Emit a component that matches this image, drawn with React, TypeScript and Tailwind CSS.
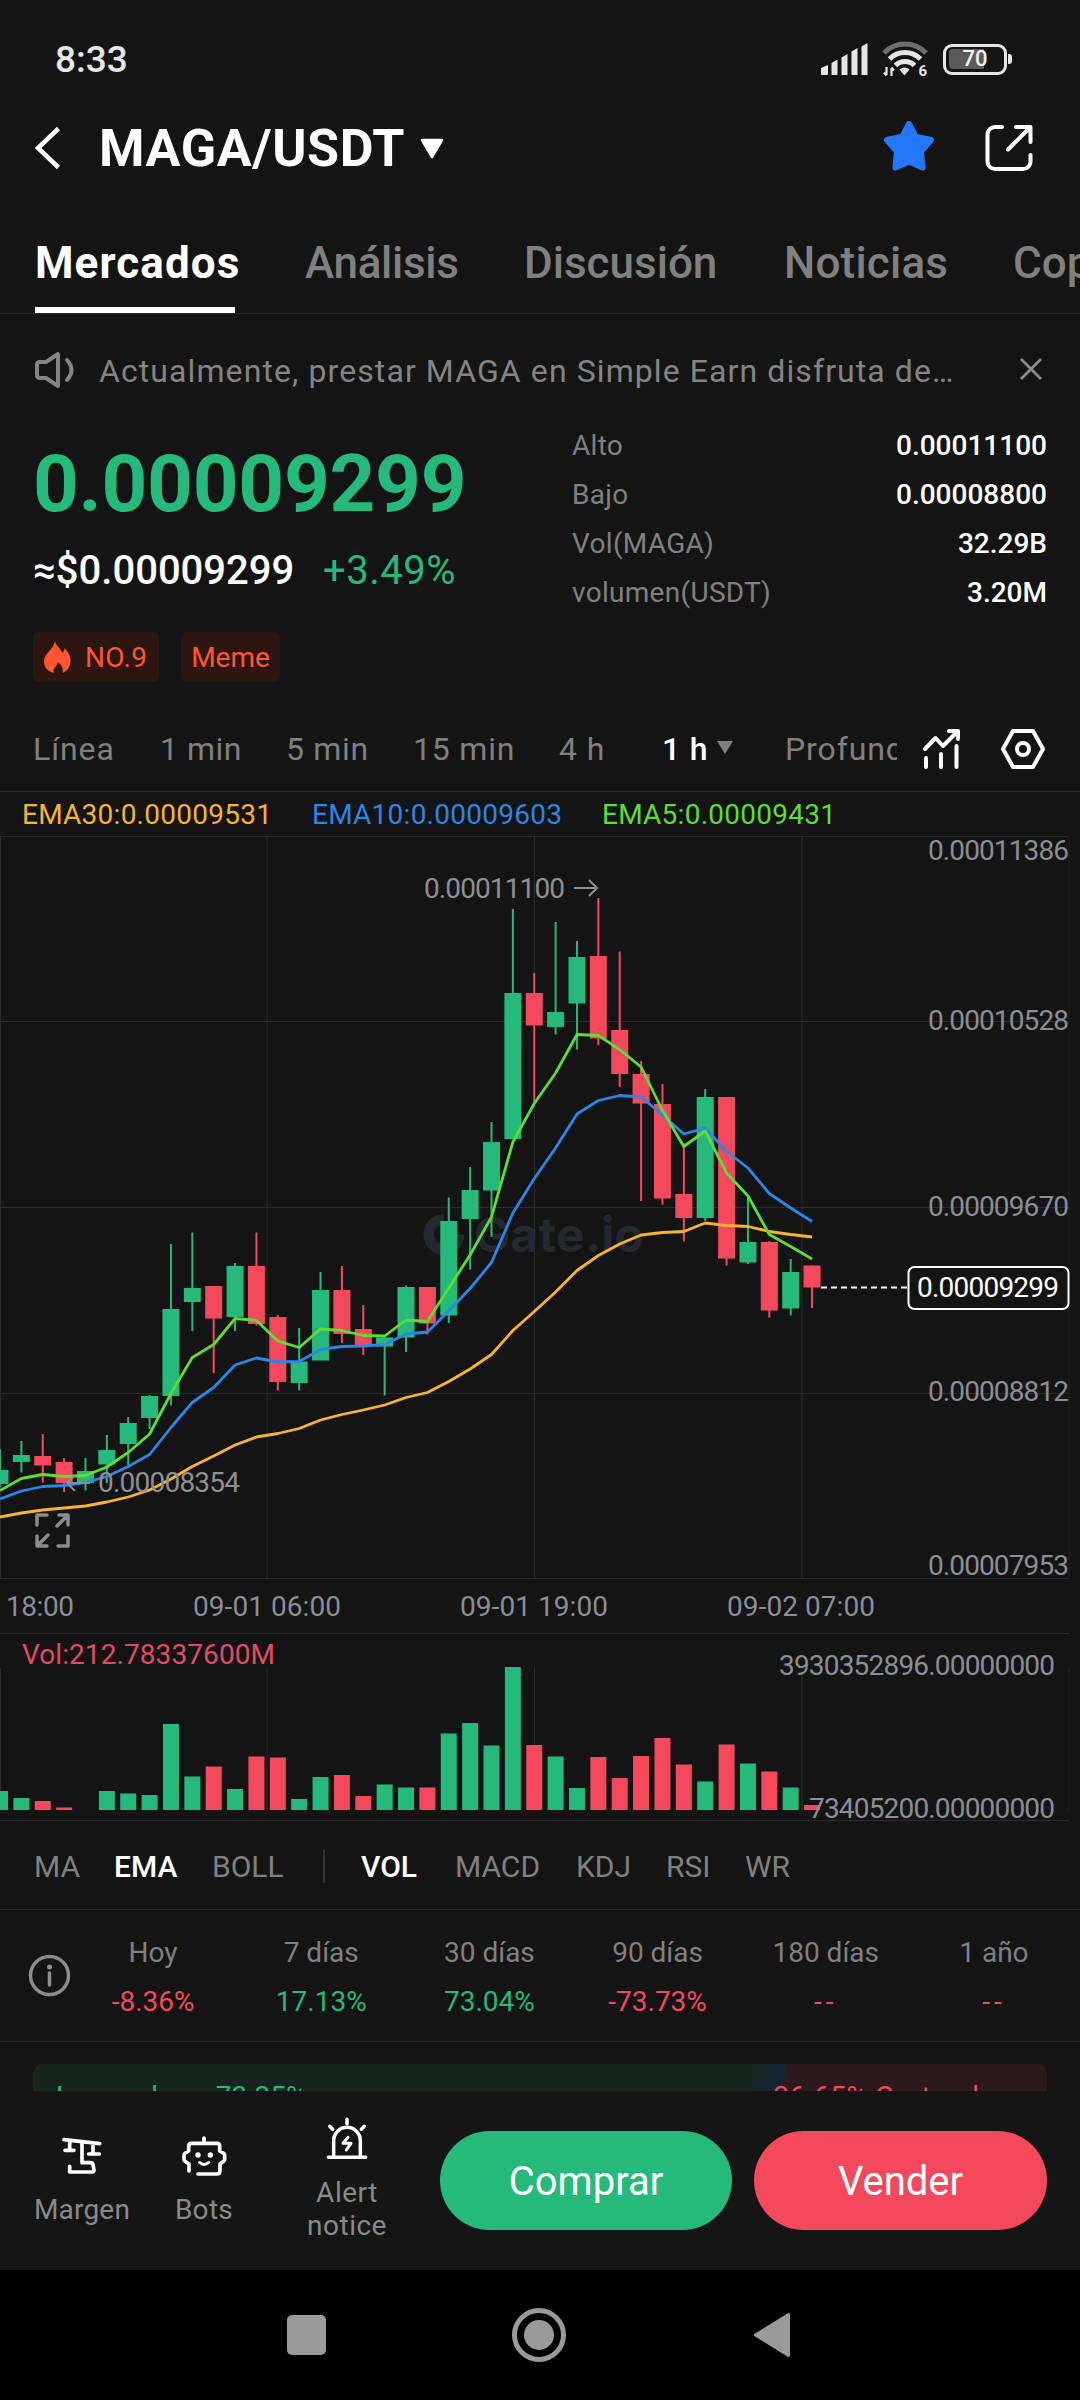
import { clsx } from 'clsx'

type Side = 'up' | 'down'

interface Candle {
  side: Side
  high: number
  low: number
  top: number
  bottom: number
  volume: number
}

const UP = '#25b97b'
const DOWN = '#f4495d'
const STEP = 21.37

// side, high, low, body top, body bottom, volume bar height
const RAW: [Side, number, number, number, number, number][] = [
  ['up', 1449, 1487, 1470, 1484, 19],
  ['up', 1441, 1472.5, 1455, 1462, 12],
  ['down', 1434, 1482.5, 1456, 1465.5, 9],
  ['down', 1458, 1492, 1462, 1483, 2.5],
  ['up', 1458, 1490.5, 1471, 1483, 0],
  ['up', 1435, 1483, 1450, 1464.5, 19],
  ['up', 1417, 1465.5, 1423, 1444, 16.5],
  ['up', 1395, 1429, 1396, 1418, 15],
  ['up', 1244, 1405.5, 1309, 1396, 86],
  ['up', 1232.5, 1331, 1288, 1302, 33.5],
  ['down', 1286, 1373, 1286, 1318.5, 43.5],
  ['up', 1263, 1331, 1266, 1317, 21],
  ['down', 1232.5, 1325.5, 1266, 1324, 53.5],
  ['down', 1315, 1390.5, 1317, 1382, 52.5],
  ['up', 1328, 1390.5, 1361.5, 1383, 11],
  ['up', 1272, 1360, 1290, 1360.5, 33],
  ['down', 1266, 1343, 1290, 1334, 35],
  ['down', 1305, 1355, 1329, 1346, 14],
  ['up', 1337, 1395.5, 1337.5, 1346.5, 25.5],
  ['up', 1285.5, 1352, 1287, 1337.5, 22.5],
  ['down', 1287, 1334.5, 1287, 1323.5, 22.5],
  ['up', 1197.5, 1323, 1221, 1315.5, 76.5],
  ['up', 1167, 1269.5, 1190, 1219, 87],
  ['up', 1122, 1237, 1142, 1190.5, 64.5],
  ['up', 909, 1139, 993, 1139, 143],
  ['down', 973, 1102.5, 993, 1025.5, 65],
  ['up', 922, 1034.5, 1012, 1027, 53.5],
  ['up', 941, 1049.5, 957, 1003.5, 22],
  ['down', 898, 1045, 956, 1038.5, 53],
  ['down', 951.5, 1087, 1030, 1074, 32],
  ['down', 1061, 1201, 1074, 1103.5, 54],
  ['down', 1084, 1204.5, 1104, 1198.5, 72],
  ['down', 1143.5, 1241.5, 1194, 1218, 45.5],
  ['up', 1089, 1221, 1097, 1218, 28.5],
  ['down', 1097, 1265.5, 1097, 1258.5, 65.5],
  ['up', 1197, 1264, 1242, 1262.5, 46.5],
  ['down', 1241, 1317.5, 1242, 1310.5, 38.5],
  ['up', 1259, 1315.5, 1272, 1308.5, 22.5],
  ['down', 1265.5, 1308, 1265.5, 1287.5, 5],
]

const candles: Candle[] = RAW.map(([side, high, low, top, bottom, volume]) => ({ side, high, low, top, bottom, volume }))

const EMA5 = [
  1490.5, 1478.5, 1474.5, 1476.5, 1475.5, 1467, 1452.5, 1434, 1393.5, 1357.5, 1344.5, 1318.5, 1320.5, 1341, 1347.5, 1329,
  1330.5, 1335.5, 1336, 1320, 1321.5, 1288, 1255, 1217, 1142, 1103.5, 1073, 1034.5, 1035.5, 1049.5, 1067, 1110.5, 1146.5,
  1131, 1173, 1196, 1234.5, 1246.5, 1259,
]
const EMA10 = [
  1499, 1491, 1486.5, 1485.5, 1482.5, 1476.5, 1466.5, 1454.5, 1427.5, 1402.5, 1387.5, 1365, 1358, 1362, 1361.5, 1349.5,
  1346.5, 1346, 1344.5, 1334, 1332, 1311, 1288.5, 1262.5, 1213, 1178.5, 1148, 1114, 1100.5, 1095.5, 1097, 1115, 1134, 1128,
  1151.5, 1168, 1193.5, 1208, 1221.5,
]
const EMA30 = [
  1517, 1513, 1510, 1508, 1506, 1502, 1497, 1490, 1479, 1466.5, 1456, 1445, 1437, 1433.5, 1428.5, 1420, 1414.5, 1410, 1405,
  1397.5, 1392.5, 1381.5, 1369, 1354.5, 1330.5, 1311.5, 1292, 1270.5, 1255.5, 1244, 1235, 1232.5, 1231.5, 1223, 1225.5,
  1226.5, 1231.5, 1234.5, 1237,
]

const toPoints = (values: number[]) => values.map((y, i) => `${(i * STEP).toFixed(1)},${y}`).join(' ')

const GRID_X = [0.5, 267, 534.5, 802]
const GRID_Y = [836.5, 1021.5, 1207.5, 1393.5, 1578.5]

const priceLabels = [
  { y: 860, text: '0.00011386' },
  { y: 1029.5, text: '0.00010528' },
  { y: 1216, text: '0.00009670' },
  { y: 1401, text: '0.00008812' },
  { y: 1575, text: '0.00007953' },
]

const timeLabels = [
  { x: 6, w: 68, text: '18:00' },
  { x: 193, w: 148, text: '09-01 06:00' },
  { x: 460, w: 148, text: '09-01 19:00' },
  { x: 727, w: 148, text: '09-02 07:00' },
]

const tabs = [
  { label: 'Mercados', cls: 'w-[270px] font-bold text-white tracking-[1.1px]' },
  { label: 'Análisis', cls: 'w-[219px] font-medium text-[#808080] tracking-[-0.3px]' },
  { label: 'Discusión', cls: 'w-[260px] font-medium text-[#808080]' },
  { label: 'Noticias', cls: 'w-[229px] font-medium text-[#808080] tracking-[0.2px]' },
  { label: 'Copiar', cls: 'font-medium text-[#808080]' },
]

const stats = [
  ['Alto', '0.00011100'],
  ['Bajo', '0.00008800'],
  ['Vol(MAGA)', '32.29B'],
  ['volumen(USDT)', '3.20M'],
]

const intervals = [
  { label: 'Línea', cls: 'w-[127px] tracking-[0.9px]' },
  { label: '1 min', cls: 'w-[126px] tracking-[0.5px]' },
  { label: '5 min', cls: 'w-[127px] tracking-[0.7px]' },
  { label: '15 min', cls: 'w-[146px] tracking-[0.8px]' },
  { label: '4 h', cls: 'w-[103px] tracking-[0.9px]' },
]

const changes = [
  { label: 'Hoy', value: '-8.36%', side: 'down' },
  { label: '7 días', value: '17.13%', side: 'up' },
  { label: '30 días', value: '73.04%', side: 'up' },
  { label: '90 días', value: '-73.73%', side: 'down' },
  { label: '180 días', value: '--', side: 'down' },
  { label: '1 año', value: '--', side: 'down' },
]

function StatusBar() {
  return (
    <div className="flex h-[118px] items-center justify-between pl-[55px] pr-[68px]">
      <span className="pt-[1px] text-[37px] font-medium text-[#e6e6e6]">8:33</span>
      <div className="flex items-center">
        <svg width="50" height="34" viewBox="0 0 50 34" fill="#e6e6e6">
          <path d="M1 32V26l7-3v9a1 1 0 0 1-1 1H2a1 1 0 0 1-1-1zM11.500 33V21l6-3.500V33zM21.500 33V15.500l6-3.500V33zM31.500 33V9.500l6-3.500V33zM41.500 33V4.500l6-3.500V33z" />
        </svg>
        <svg className="ml-[12px] overflow-visible" width="46" height="36" viewBox="0 0 46 36" fill="none">
          <path d="M2 12a29 29 0 0 1 42 0" stroke="#6e6e6e" strokeWidth="5" />
          <path d="M7.500 18a21.500 21.500 0 0 1 31 0" stroke="#e6e6e6" strokeWidth="5" />
          <path d="M13.500 24.500a13.500 13.500 0 0 1 19 0" stroke="#e6e6e6" strokeWidth="5" />
          <path d="M17.500 28.500a8 8 0 0 1 10 0L22.500 34.500z" fill="#e6e6e6" />
          <path d="M4.500 26v8M2 31.500l2.500 3M9.500 35v-8M12 29.500l-2.500-3" stroke="#e6e6e6" strokeWidth="2.200" />
          <text x="36.500" y="35" fill="#e6e6e6" className="font-['Roboto'] text-[15px] font-bold">6</text>
        </svg>
        <div className="relative ml-[15px] flex h-[31px] w-[64px] items-center justify-center rounded-[9px] border-[3px] border-[#e6e6e6]">
          <div className="absolute left-[3px] h-[20px] w-[35px] rounded-l-[4px] bg-[#5a5a5a]" />
          <span className="relative text-[22px] leading-none font-medium text-[#f0f0f0]">70</span>
        </div>
        <div className="ml-[1px] h-[10px] w-[4px] rounded-r-[3px] bg-[#e6e6e6]" />
      </div>
    </div>
  )
}

function Header() {
  return (
    <header className="flex h-[60px] items-center pr-[47px] pl-[33px]">
      <svg width="30" height="44" viewBox="0 0 30 44" fill="none" stroke="#fff" strokeWidth="4.500">
        <path d="M25.500 2.500 5 22l20.500 19.500" />
      </svg>
      <h1 className="ml-[36px] pt-[2px] text-[52px] leading-none font-bold tracking-[0.6px] text-white">MAGA/USDT</h1>
      <svg className="ml-[15px]" width="24" height="21" viewBox="0 0 24 21">
        <path d="M2 2h20L12 19z" fill="#fff" stroke="#fff" strokeWidth="2.500" strokeLinejoin="round" />
      </svg>
      <svg className="mb-[4px] ml-auto" width="54" height="52" viewBox="0 0 54 52">
        <path
          d="M27 4l6.800 12.800 15.200 3.200-10 11.500 1.600 16L27 41.500 13.400 47.500l1.600-16L5 20l15.200-3.200z"
          fill="#2277fb"
          stroke="#2277fb"
          strokeWidth="6"
          strokeLinejoin="round"
        />
      </svg>
      <svg className="ml-[49px]" width="48" height="48" viewBox="0 0 48 48" fill="none" stroke="#fff" strokeWidth="4" strokeLinecap="round">
        <path d="M17 3H10a7.500 7.500 0 0 0-7.500 7.500v27A7.500 7.500 0 0 0 10 45h28a7.500 7.500 0 0 0 7.500-7.500V31" />
        <path d="M31 3h14.500v15M44.500 4 23 25.500" strokeLinejoin="round" />
      </svg>
    </header>
  )
}

function Tabs() {
  return (
    <nav className="relative h-[136px] overflow-hidden border-b border-[#2c2c2c] pl-[35px]">
      <div className="flex pt-[55px]">
        {tabs.map((tab) => (
          <span key={tab.label} className={clsx('shrink-0 text-[44px] leading-[60px] whitespace-nowrap', tab.cls)}>
            {tab.label}
          </span>
        ))}
      </div>
      <div className="absolute bottom-0 left-[35px] h-[6px] w-[200px] bg-white" />
    </nav>
  )
}

function Notice() {
  return (
    <div className="flex h-[106px] items-center pt-[6px] pr-[37px] pl-[34px] text-[#848484]">
      <svg width="42" height="38" viewBox="0 0 42 38" fill="none" stroke="#848484" strokeWidth="4" strokeLinejoin="round" strokeLinecap="round">
        <path d="M3 14q0-3 3-3h6L24 3v32l-12-8H6q-3 0-3-3z" />
        <path d="M33 9q9 10 0 20" />
      </svg>
      <p className="ml-[23px] w-[880px] pt-[1px] text-[32px] tracking-[1.090px] whitespace-nowrap">
        Actualmente, prestar MAGA en Simple Earn disfruta de…
      </p>
      <svg className="mb-[2px] ml-auto" width="24" height="24" viewBox="0 0 24 24" fill="none" stroke="#8c8c8c" strokeWidth="2.800">
        <path d="M2 2l20 20M22 2 2 22" />
      </svg>
    </div>
  )
}

function Summary() {
  return (
    <section className="flex h-[287px] justify-between pr-[33px] pl-[33px]">
      <div className="pt-[7px]">
        <div className="text-[80px] leading-[114px] font-bold tracking-[-0.3px] text-[#25b97b]">0.00009299</div>
        <div className="flex h-[60px] items-center text-[40px]">
          <span className="w-[290px] font-medium text-white">≈$0.00009299</span>
          <span className="tracking-[0.5px] text-[#25b97b]">+3.49%</span>
        </div>
        <div className="mt-[31px] flex gap-[22px] text-[28px] text-[#ff5630]">
          <span className="flex h-[50px] w-[126px] items-center rounded-[6px] bg-[#2d1611] pl-[10px]">
            <svg width="29" height="32" viewBox="0 0 29 32" fill="#ff5630">
              <path d="M12 0c1 5 5 7 7.500 12 1.500-1.500 2-3 2-5 4 4 6.500 9 6 14-.4 5-3.500 9-8 11 1-4-.5-8-4.500-10.500-1 4-4.500 5-4.500 8.500 0 1 .2 1.500.5 2C5 30.500 1 26.500 1 20.500 1 12 10.500 9 12 0z" />
            </svg>
            <span className="ml-[13px] pt-[2px] tracking-[0.3px]">NO.9</span>
          </span>
          <span className="flex h-[50px] w-[99px] items-center justify-center rounded-[6px] bg-[#2d1611] pt-[2px]">Meme</span>
        </div>
      </div>
      <dl className="w-[475px] pt-[1px] text-[28px]">
        {stats.map(([label, value]) => (
          <div key={label} className="flex h-[49px] items-center justify-between">
            <dt className="tracking-[0.3px] text-[#808080]">{label}</dt>
            <dd className="font-medium text-white">{value}</dd>
          </div>
        ))}
      </dl>
    </section>
  )
}

function Intervals() {
  return (
    <div className="flex h-[85px] items-center border-b border-[#2c2c2c] pl-[33px] text-[32px] text-[#808080]">
      {intervals.map((item) => (
        <span key={item.label} className={clsx('shrink-0 whitespace-nowrap', item.cls)}>
          {item.label}
        </span>
      ))}
      <div className="flex w-[123px] shrink-0 items-center">
        <span className="font-medium tracking-[0.8px] text-white">1 h</span>
        <svg className="mb-[4px] ml-[9px]" width="16" height="13" viewBox="0 0 16 13">
          <path d="M0 0h16L8 13z" fill="#808080" />
        </svg>
      </div>
      <span className="w-[112px] shrink-0 overflow-hidden tracking-[0.9px] whitespace-nowrap">Profundidad</span>
      <svg className="ml-[25px] shrink-0" width="40" height="42" viewBox="0 0 40 42" fill="none" stroke="#fff" strokeWidth="4" strokeLinecap="round">
        <path d="M3 21 13.500 10l7.500 8L35 4M27 3h9v8" strokeLinejoin="round" />
        <path d="M4 30v9M19 26v13M34.500 18v21" />
      </svg>
      <svg className="ml-[39px] shrink-0" width="44" height="42" viewBox="0 0 44 42" fill="none" stroke="#fff" strokeWidth="4" strokeLinejoin="round">
        <path d="M12 3h20l10 18-10 18H12L2 21z" />
        <circle cx="22" cy="21" r="6" />
      </svg>
    </div>
  )
}

function Legend() {
  return (
    <div className="flex h-[44px] items-center pt-[2px] pl-[22px] text-[28px] tracking-[0.25px]">
      <span className="w-[290px] text-[#f7b52e]">EMA30:0.00009531</span>
      <span className="w-[290px] text-[#2b86ea]">EMA10:0.00009603</span>
      <span className="text-[#5ede34]">EMA5:0.00009431</span>
    </div>
  )
}

function PriceChart() {
  return (
    <svg className="block font-['Roboto'] text-[28px]" width="1080" height="797" viewBox="0 836 1080 797">
      <g stroke="#2a2b2e" strokeWidth="1">
        {GRID_X.map((x) => (
          <line key={x} x1={x} x2={x} y1="836" y2="1579" />
        ))}
        <line x1="1069" x2="1069" y1="836" y2="1579" opacity="0.6" />
        {GRID_Y.map((y) => (
          <line key={y} x1="0" x2="1069" y1={y} y2={y} />
        ))}
      </g>

      <g fill="#252831">
        <path d="M444 1214a20.500 20.500 0 1 0 20.500 20.500H454a10 10 0 1 1-10-10z" />
        <path d="M447 1224h8v8h-8z" />
        <text x="474" y="1252" textLength="170" className="font-['Inter'] text-[48px] font-bold">Gate.io</text>
      </g>

      {candles.map((c, i) => {
        const x = i * STEP
        const color = c.side === 'up' ? UP : DOWN
        return (
          <g key={i} fill={color}>
            <rect x={x - 1} y={c.high} width="2" height={c.low - c.high} />
            <rect x={x - 8.5} y={c.top} width="17" height={c.bottom - c.top} />
          </g>
        )
      })}

      <g fill="none" strokeWidth="2.800" strokeLinejoin="round">
        <polyline points={toPoints(EMA30)} stroke="#f7b52e" />
        <polyline points={toPoints(EMA10)} stroke="#2b86ea" />
        <polyline points={toPoints(EMA5)} stroke="#5ede34" />
      </g>

      <g fill="#8f8f8f">
        <text x="424" y="897.500" textLength="141">0.00011100</text>
        <text x="98" y="1492" textLength="142">0.00008354</text>
      </g>
      <g fill="none" stroke="#8f8f8f" strokeWidth="2">
        <path d="M574 888h23M589 880l8 8-8 8" />
        <path d="M90 1483H67M75 1475l-8 8 8 8" />
      </g>

      <g fill="none" stroke="#8c8c8c" strokeWidth="3.500" strokeLinecap="round" strokeLinejoin="round">
        <path d="M47 1515H37v10M59 1515h9v10M67 1516l-10 10" />
        <path d="M37 1536v10h10M38 1545l10-10M58 1546h10v-10" />
      </g>

      <g fill="#8b8d98">
        {priceLabels.map((p) => (
          <text key={p.text} x="928" y={p.y} textLength="141">{p.text}</text>
        ))}
        {timeLabels.map((t) => (
          <text key={t.text} x={t.x} y="1615.500" textLength={t.w}>{t.text}</text>
        ))}
      </g>

      <line x1="821" x2="907" y1="1287.500" y2="1287.500" stroke="#fff" strokeWidth="2" strokeDasharray="6 4" />
      <rect x="908.500" y="1267" width="160" height="42" rx="6" fill="#141414" stroke="#fff" strokeWidth="2" />
      <text x="917" y="1297" fill="#fff" textLength="142">0.00009299</text>
    </svg>
  )
}

function VolumeChart() {
  return (
    <svg className="block font-['Roboto'] text-[28px]" width="1080" height="188" viewBox="0 1633 1080 188">
      <g stroke="#2c2c2e" strokeWidth="1">
        <line x1="0" x2="1069" y1="1633.500" y2="1633.500" />
        <line x1="0" x2="1069" y1="1820.500" y2="1820.500" />
        {GRID_X.map((x) => (
          <line key={x} x1={x} x2={x} y1="1668" y2="1810" />
        ))}
        <line x1="1069" x2="1069" y1="1668" y2="1810" opacity="0.6" />
      </g>
      {candles.map((c, i) => (
        <rect key={i} x={i * STEP - 8} y={1810 - c.volume} width="16" height={c.volume} fill={c.side === 'up' ? UP : DOWN} />
      ))}
      <text x="22" y="1663.500" fill="#e04c63" textLength="253">Vol:212.78337600M</text>
      <g fill="#8b8d98">
        <text x="779" y="1675" textLength="276">3930352896.00000000</text>
        <text x="809" y="1818" textLength="246">73405200.00000000</text>
      </g>
    </svg>
  )
}

function Indicators() {
  return (
    <div className="flex h-[89px] items-center border-b border-[#2c2c2c] pt-[2px] pl-[34px] text-[30px] text-[#808080]">
      <span className="w-[80px]">MA</span>
      <span className="w-[98px] font-medium text-white">EMA</span>
      <span className="w-[111px]">BOLL</span>
      <span className="h-[33px] w-[2px] bg-[#333]" />
      <span className="ml-[36px] w-[94px] font-medium text-white">VOL</span>
      <span className="w-[121px]">MACD</span>
      <span className="w-[90px]">KDJ</span>
      <span className="w-[79px]">RSI</span>
      <span>WR</span>
    </div>
  )
}

function Changes() {
  return (
    <div className="flex h-[132px] items-start border-b border-[#2c2c2c] pt-[18px] text-[28px]">
      <svg className="mt-[26px] ml-[28px] shrink-0" width="43" height="43" viewBox="0 0 43 43" fill="none" stroke="#8c8c8c" strokeWidth="3.500">
        <circle cx="21.500" cy="21.500" r="19" />
        <path d="M21.500 19v12" strokeLinecap="round" />
        <circle cx="21.500" cy="13" r="2.500" fill="#8c8c8c" stroke="none" />
      </svg>
      <div className="mr-[2px] -ml-[2px] grid flex-1 grid-cols-6">
        {changes.map((item) => (
          <div key={item.label} className="text-center leading-[49px]">
            <div className="text-[#808080]">{item.label}</div>
            <div
              className={clsx(
                item.side === 'up' ? 'text-[#25b97b]' : 'text-[#f4495d]',
                item.value === '--' && 'tracking-[4px]',
              )}
            >
              {item.value}
            </div>
          </div>
        ))}
      </div>
    </div>
  )
}

function RatioBar() {
  return (
    <div className="h-[49px] overflow-hidden px-[33px] pt-[22px]">
      <div className="flex h-[66px] items-center justify-between overflow-hidden rounded-[10px] bg-[linear-gradient(105deg,#17251e_0%,#17251e_69.5%,#14263a_73.1%,#2b191c_73.3%,#2b191c_100%)] px-[23px] text-[28px]">
        <span className="text-[#25b97b]">
          Largando<span className="ml-[42px]">73.35%</span>
        </span>
        <span className="pr-[28px] tracking-[0.6px] text-[#f4495d]">26.65% Cortando</span>
      </div>
    </div>
  )
}

function BottomBar() {
  return (
    <footer className="flex h-[179px] bg-[#151515] text-[28px] text-[#8a8a8a]">
      <div className="ml-[30px] flex w-[104px] flex-col items-center pt-[45px]">
        <svg width="40" height="40" viewBox="127 242 120 120" fill="none" stroke="#fff" strokeWidth="11" strokeLinecap="round" strokeLinejoin="round">
          <path d="M133 253l107 12M150 257v28M136 285h27M220 264v32M207 296h32" />
          <path d="M187 260v62h26q6 0 7 6l3 16q0 6-6 6h-67v-17" />
        </svg>
        <span className="mt-[17px] leading-[33px] tracking-[0.2px]">Margen</span>
      </div>
      <div className="ml-[20px] flex w-[100px] flex-col items-center pt-[45px]">
        <svg width="46" height="40" viewBox="479 242 138 120" fill="none" stroke="#fff" strokeWidth="11" strokeLinecap="round" strokeLinejoin="round">
          <path d="M548 248v16M503 347v-21l-12-8q-3-2-3-6v-12q0-4 3-6l11-7v-15q0-8 8-8h77q8 0 8 8v15l12 7q3 2 3 6v12q0 4-3 6l-11 8v20q0 10-10 10h-56" />
          <path d="M534 321q14 13 29 0" strokeWidth="8" />
          <circle cx="530" cy="299" r="4" strokeWidth="8" />
          <circle cx="567" cy="299" r="4" strokeWidth="8" />
        </svg>
        <span className="mt-[17px] leading-[33px] tracking-[0.3px]">Bots</span>
      </div>
      <div className="ml-[42px] flex w-[102px] flex-col items-center pt-[26px]">
        <svg width="42" height="44" viewBox="915 186 126 132" fill="none" stroke="#fff" strokeWidth="10.500" strokeLinecap="round" strokeLinejoin="round">
          <path d="M978 193v13M926 214l9 9M1030 214l-9 9M922 307h112" />
          <path d="M938 304v-47a40 40 0 0 1 80 0v47" />
          <path d="M981 247l-15 18h24l-14 20" strokeWidth="9" />
        </svg>
        <span className="mt-[15px] text-center leading-[33px] tracking-[0.5px]">Alert notice</span>
      </div>
      <button className="mt-[40px] ml-[42px] h-[99px] w-[292px] rounded-full bg-[#25b97b] pt-[3px] text-[40px] text-white">Comprar</button>
      <button className="mt-[40px] ml-[22px] h-[99px] w-[293px] rounded-full bg-[#f4495d] pt-[3px] text-[40px] text-white">Vender</button>
    </footer>
  )
}

function SystemNav() {
  return (
    <div className="flex h-[130px] items-center bg-black">
      <div className="ml-[287px] h-[40px] w-[39px] rounded-[5px] bg-[#9a9a9a]" />
      <div className="ml-[186px] flex h-[54px] w-[54px] items-center justify-center rounded-full border-[5px] border-[#9a9a9a]">
        <div className="h-[30px] w-[30px] rounded-full bg-[#9a9a9a]" />
      </div>
      <svg className="ml-[187px]" width="38" height="46" viewBox="0 0 38 46">
        <path d="M35.500 2.500v41L2.500 23z" fill="#9a9a9a" stroke="#9a9a9a" strokeWidth="3" strokeLinejoin="round" />
      </svg>
    </div>
  )
}

export default function App() {
  return (
    <div className="h-[2400px] w-[1080px] overflow-hidden bg-[#141414] font-['Roboto',sans-serif]">
      <StatusBar />
      <Header />
      <Tabs />
      <Notice />
      <Summary />
      <Intervals />
      <Legend />
      <PriceChart />
      <VolumeChart />
      <Indicators />
      <Changes />
      <RatioBar />
      <BottomBar />
      <SystemNav />
    </div>
  )
}
